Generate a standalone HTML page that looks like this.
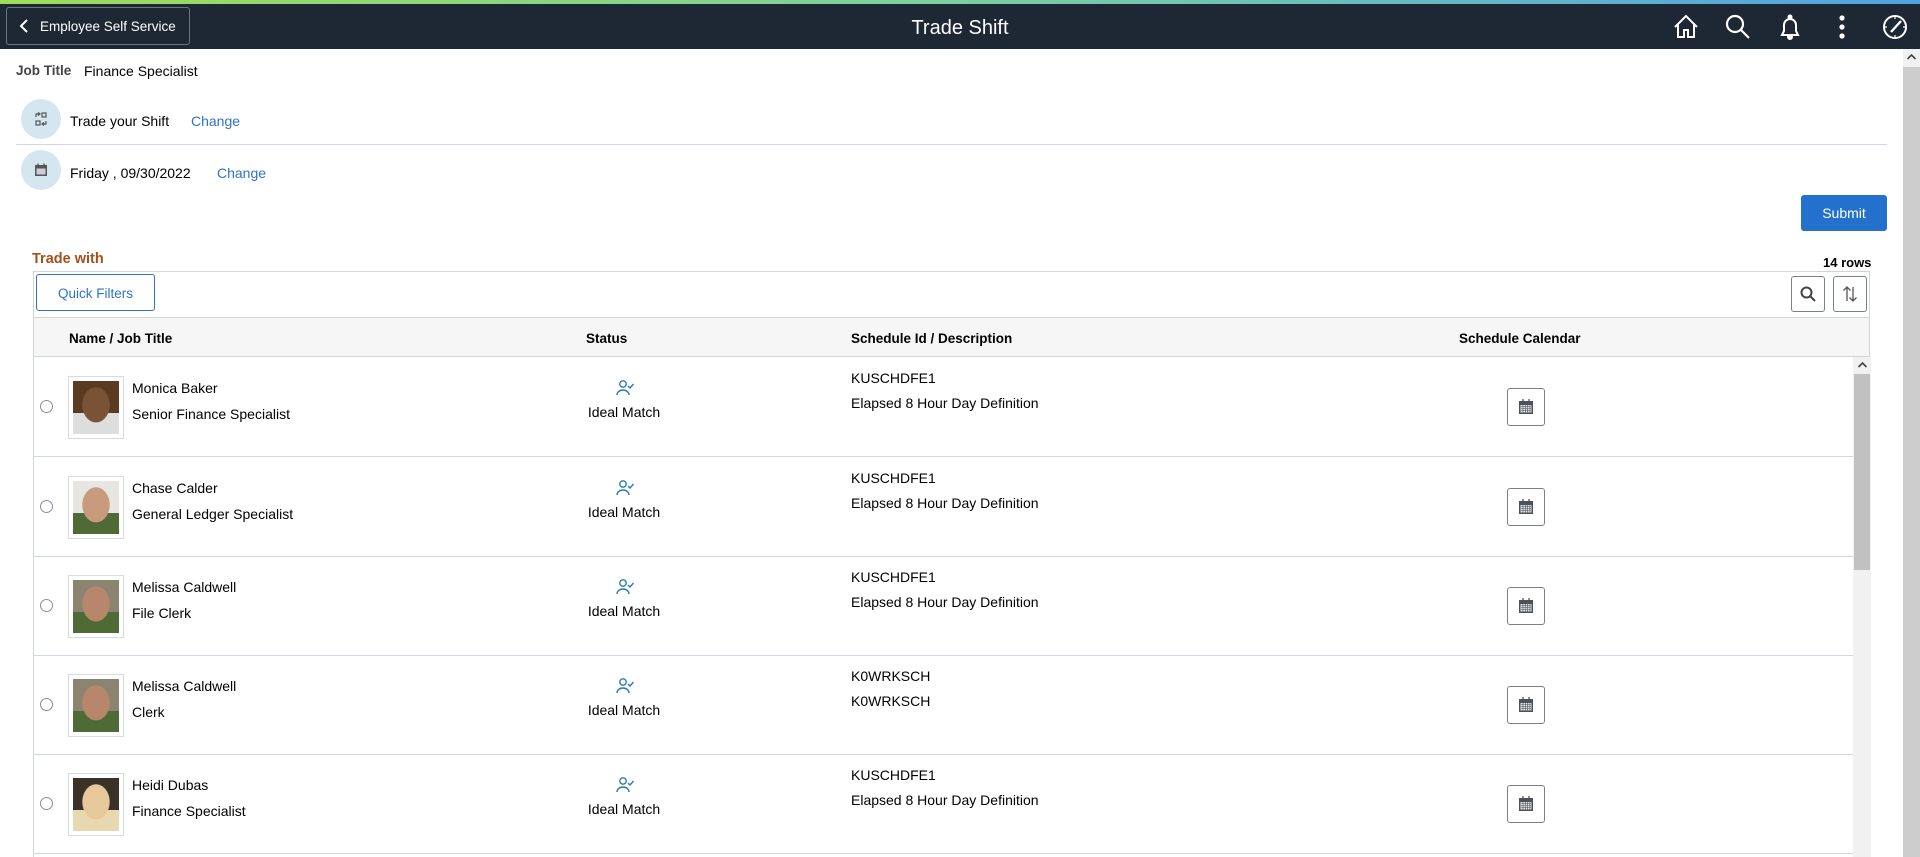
<!DOCTYPE html>
<html><head><meta charset="utf-8"><style>
*{margin:0;padding:0;box-sizing:border-box}
body{width:1920px;height:857px;overflow:hidden;background:#fff;font-family:"Liberation Sans",sans-serif;color:#000;position:relative;font-size:14px}
.a{position:absolute;white-space:nowrap}
.topbar{left:0;top:0;width:1920px;height:4px;background:linear-gradient(90deg,#9fdc5a,#7ccfa0 50%,#4fa3e4)}
.hdr{left:0;top:4px;width:1920px;height:45px;background:#1e2734}
.back{left:6px;top:7px;width:184px;height:38px;border:1px solid #6d747c;border-radius:3px;color:#fff;font-size:13.5px;line-height:38px;padding-left:33px}
.title{left:0;width:1920px;top:17px;text-align:center;color:#fff;font-size:20px}
.circ{width:40px;height:40px;border-radius:50%;background:#d4e6ef}
.link{color:#2f73c6}
.line{height:1px;background:#cfd6de}
.th{font-weight:bold;font-size:13.5px;top:331px}
.photo{width:56px;height:63px;border:1px solid #d8dbe0;background:#fff;padding:4px}
.photo div{width:100%;height:100%}
.radio{width:13px;height:13px;border:1.5px solid #8c8c99;border-radius:50%}
.calbtn{width:38px;height:38px;border:1px solid #7b8086;border-radius:3px;background:#fff}
</style></head><body>
<div class="a topbar"></div>
<div class="a hdr"></div>
<div class="a back">Employee Self Service</div>
<svg class="a" style="left:18px;top:18px" width="12" height="16" viewBox="0 0 12 16"><path d="M9 2L3 8l6 6" stroke="#fff" stroke-width="2" fill="none"/></svg>
<div class="a title">Trade Shift</div>
<svg class="a" style="left:1672px;top:13px" width="28" height="28" viewBox="0 0 28 28" fill="none" stroke="#fff" stroke-width="2"><path d="M3 14L14 3l11 11M6 11v13h6v-7h4v7h6V11"/></svg>
<svg class="a" style="left:1724px;top:13px" width="28" height="28" viewBox="0 0 28 28" fill="none" stroke="#fff" stroke-width="2.2"><circle cx="11" cy="11" r="8"/><path d="M17 17l8 8"/></svg>
<svg class="a" style="left:1776px;top:13px" width="28" height="28" viewBox="0 0 28 28" fill="none" stroke="#fff" stroke-width="2"><path d="M6 22h16l-2-4v-6a6 6 0 0 0-12 0v6z"/><circle cx="14" cy="4" r="1.5" fill="#fff"/><circle cx="14" cy="24" r="2" fill="#fff"/></svg>
<svg class="a" style="left:1832px;top:13px" width="20" height="28" viewBox="0 0 20 28" fill="#fff"><circle cx="10" cy="5" r="2.6"/><circle cx="10" cy="14" r="2.6"/><circle cx="10" cy="23" r="2.6"/></svg>
<svg class="a" style="left:1881px;top:13px" width="28" height="28" viewBox="0 0 28 28" fill="none" stroke="#fff" stroke-width="2"><circle cx="14" cy="14" r="11"/><path d="M20 8L10 19" stroke-width="2.4"/><path d="M14 4v2M14 22v2M4 14h2M22 14h2" stroke-width="1.2"/></svg>
<div class="a" style="left:1903px;top:49px;width:17px;height:808px;background:#cdcdcd"></div>
<div class="a" style="left:1903px;top:49px;width:17px;height:18px;background:#f1f1f1"></div>
<svg class="a" style="left:1906px;top:53px" width="11" height="8" viewBox="0 0 11 8"><path d="M1.5 6l4-4 4 4" stroke="#444" stroke-width="1.6" fill="none"/></svg>

<div class="a" style="left:16px;top:63px;font-weight:bold;color:#444;font-size:13.5px">Job Title</div>
<div class="a" style="left:84px;top:63px">Finance Specialist</div>

<div class="a circ" style="left:21px;top:99px"></div>
<svg class="a" style="left:33px;top:111px" width="16" height="16" viewBox="0 0 16 16" fill="none" stroke="#555" stroke-width="1.2"><rect x="9" y="2" width="4" height="4"/><rect x="3" y="10" width="4" height="4"/><path d="M3 6V3h4M5 1.5L7 3 5 4.5M13 10v3H9M11 11.5L9 13l2 1.5"/></svg>
<div class="a" style="left:70px;top:113px">Trade your Shift</div>
<div class="a link" style="left:191px;top:113px">Change</div>
<div class="a line" style="left:16px;top:144px;width:1871px"></div>
<div class="a circ" style="left:21px;top:150px"></div>
<svg class="a" style="left:33px;top:162px" width="16" height="16" viewBox="0 0 16 16"><rect x="2" y="3" width="12" height="11" fill="#555"/><rect x="3.5" y="6.5" width="9" height="6" fill="#ccd"/><path d="M5 1.5v3M11 1.5v3" stroke="#555" stroke-width="1.4"/></svg>
<div class="a" style="left:70px;top:165px">Friday , 09/30/2022</div>
<div class="a link" style="left:217px;top:165px">Change</div>

<div class="a" style="left:1801px;top:195px;width:86px;height:36px;background:#2371cc;border-radius:3px;color:#fff;text-align:center;line-height:37px;font-size:14px">Submit</div>

<div class="a" style="left:32px;top:251px;color:#a5501c;font-weight:bold;font-size:14.5px">Trade with</div>
<div class="a" style="left:1823px;top:255px;font-weight:bold;font-size:13px">14 rows</div>

<div class="a" style="left:33px;top:271px;width:1837px;height:586px;border:1px solid #d0d5dc;border-bottom:none"></div>
<div class="a" style="left:36px;top:274px;width:119px;height:37px;border:1px solid #2f73c6;border-radius:3px;color:#2f73c6;text-align:center;line-height:37px;font-size:13.5px">Quick Filters</div>
<div class="a" style="left:1791px;top:276px;width:34px;height:36px;border:1px solid #7b8086;border-radius:3px"></div>
<svg class="a" style="left:1799px;top:285px" width="18" height="18" viewBox="0 0 18 18" fill="none" stroke="#444" stroke-width="2"><circle cx="7.5" cy="7.5" r="5"/><path d="M11 11l5 5"/></svg>
<div class="a" style="left:1833px;top:276px;width:34px;height:36px;border:1px solid #7b8086;border-radius:3px"></div>
<svg class="a" style="left:1841px;top:284px" width="18" height="20" viewBox="0 0 18 20" fill="none" stroke="#555" stroke-width="1.3"><path d="M6 17V3M2.5 6.5L6 3l3.5 3.5M12 3v14M8.5 13.5L12 17l3.5-3.5"/></svg>
<div class="a" style="left:34px;top:317px;width:1835px;height:40px;background:#f6f6f6;border-top:1px solid #d0d5dc;border-bottom:1px solid #d0d5dc"></div>
<div class="a th" style="left:69px">Name / Job Title</div>
<div class="a th" style="left:586px">Status</div>
<div class="a th" style="left:851px">Schedule Id / Description</div>
<div class="a th" style="left:1459px">Schedule Calendar</div>
<div class="a" style="left:1853px;top:357px;width:18px;height:500px;background:#f1f1f1"></div>
<div class="a" style="left:1854px;top:374px;width:16px;height:196px;background:#c1c1c1"></div>
<svg class="a" style="left:1857px;top:361px" width="11" height="8" viewBox="0 0 11 8"><path d="M1.5 6l4-4 4 4" stroke="#444" stroke-width="1.6" fill="none"/></svg>

<div id="rows"></div>
<script>
var d=[["Monica Baker","Senior Finance Specialist","KUSCHDFE1","Elapsed 8 Hour Day Definition","#5a3b22","#7a5236"],
["Chase Calder","General Ledger Specialist","KUSCHDFE1","Elapsed 8 Hour Day Definition","#e8e6e2","#c89a7e"],
["Melissa Caldwell","File Clerk","KUSCHDFE1","Elapsed 8 Hour Day Definition","#8a8470","#b8866a"],
["Melissa Caldwell","Clerk","K0WRKSCH","K0WRKSCH","#8a8470","#b8866a"],
["Heidi Dubas","Finance Specialist","KUSCHDFE1","Elapsed 8 Hour Day Definition","#3a3228","#e6c89a"]];
var h="",tops=[357,457,556,655,754];
for(var i=0;i<5;i++){var t=tops[i];
h+='<div class="a radio" style="left:40px;top:'+(t+43)+'px"></div>';
h+='<div class="a photo" style="left:68px;top:'+(t+19)+'px"><div style="background:radial-gradient(ellipse 14px 18px at 50% 45%,'+d[i][5]+' 95%,transparent 100%),linear-gradient(180deg,'+d[i][4]+' 60%,'+(i==0?'#ddd':i==4?'#e8d8b0':'#4e6a36')+' 60%)"></div></div>';
h+='<div class="a" style="left:132px;top:'+(t+23)+'px">'+d[i][0]+'</div>';
h+='<div class="a" style="left:132px;top:'+(t+49)+'px">'+d[i][1]+'</div>';
h+='<svg class="a" style="left:615px;top:'+(t+22)+'px" width="20" height="18" viewBox="0 0 20 18" fill="none" stroke="#2a7cb0" stroke-width="1.4"><circle cx="8" cy="5" r="3.2"/><path d="M2 16a6 5 0 0 1 12 0M13 7l2 2 3.5-4"/></svg>';
h+='<div class="a" style="left:544px;width:160px;text-align:center;top:'+(t+47)+'px">Ideal Match</div>';
h+='<div class="a" style="left:851px;top:'+(t+13)+'px">'+d[i][2]+'</div>';
h+='<div class="a" style="left:851px;top:'+(t+38)+'px">'+d[i][3]+'</div>';
h+='<div class="a calbtn" style="left:1507px;top:'+(t+31)+'px"></div>';
h+='<svg class="a" style="left:1517px;top:'+(t+41)+'px" width="18" height="18" viewBox="0 0 18 18"><rect x="2" y="3" width="14" height="13" fill="#4d5258"/><rect x="3.5" y="7" width="11" height="7.5" fill="#dfe2e6"/><path d="M4 8.5h10M4 10.5h10M4 12.5h10M6 7v8M8.3 7v8M10.6 7v8M12.9 7v8" stroke="#4d5258" stroke-width=".6"/><path d="M6 1v4M12 1v4" stroke="#4d5258" stroke-width="1.3"/></svg>';
h+='<div class="a line" style="left:34px;top:'+(t+99)+'px;width:1819px"></div>';}
document.getElementById("rows").innerHTML=h;
</script>
</body></html>
